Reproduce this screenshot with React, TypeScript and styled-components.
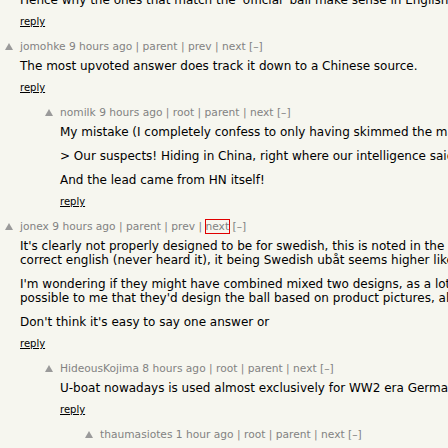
import React from 'react';
import styled, { createGlobalStyle } from 'styled-components';

const GlobalStyle = createGlobalStyle`
  html, body {
    margin: 0;
    padding: 0;
    background: #f6f6ef;
    overflow: hidden;
  }
  body {
    font-family: Verdana, "DejaVu Sans", Geneva, sans-serif;
    color: #000;
  }
`;

const Thread = styled.div`
  width: 515px;
  margin-top: -7px;
`;

const CommentRow = styled.div<{ $level: number }>`
  display: flex;
  align-items: flex-start;
  padding-left: ${(p) => p.$level * 40}px;
  margin-top: 12px;
  &:first-child {
    margin-top: 0;
  }
`;

const VoteCell = styled.div`
  width: 20px;
  flex-shrink: 0;
`;

const VoteArrow = styled.div`
  width: 0;
  height: 0;
  margin: 3px 0 0 5px;
  border-left: 4px solid transparent;
  border-right: 4px solid transparent;
  border-bottom: 7px solid #9a9a9a;
`;

const Content = styled.div`
  flex: 1;
  min-width: 0;
`;

const Head = styled.div`
  font-size: 8pt;
  line-height: 13px;
  color: #828282;
  white-space: nowrap;
`;

const HeadLink = styled.a<{ $focused?: boolean }>`
  color: #828282;
  text-decoration: none;
  outline: ${(p) => (p.$focused ? '1px solid #e00000' : 'none')};
`;

const Body = styled.div<{ $first?: boolean }>`
  font-size: 12px;
  line-height: 14px;
  margin-top: ${(p) => (p.$first ? 0 : 6)}px;
`;

const Para = styled.p`
  margin: 0;
  & + & {
    margin-top: 10px;
  }
`;

const Reply = styled.div`
  margin-top: 9px;
  font-size: 10px;
  line-height: 12px;
`;

const ReplyLink = styled.a`
  color: #000;
  text-decoration: underline;
`;

type CommentData = {
  level: number;
  user?: string;
  age?: string;
  links?: string[];
  focused?: string;
  paras: string[];
};

const comments: CommentData[] = [
  {
    level: 0,
    paras: ["Hence why the ones that match the 'official' ball make sense in English."],
  },
  {
    level: 0,
    user: 'jomohke',
    age: '9 hours ago',
    links: ['parent', 'prev', 'next'],
    paras: ['The most upvoted answer does track it down to a Chinese source.'],
  },
  {
    level: 1,
    user: 'nomilk',
    age: '9 hours ago',
    links: ['root', 'parent', 'next'],
    paras: [
      'My mistake (I completely confess to only having skimmed the matter).',
      '> Our suspects! Hiding in China, right where our intelligence said!',
      'And the lead came from HN itself!',
    ],
  },
  {
    level: 0,
    user: 'jonex',
    age: '9 hours ago',
    links: ['parent', 'prev', 'next'],
    focused: 'next',
    paras: [
      "It's clearly not properly designed to be for swedish, this is noted in the article correct english (never heard it), it being Swedish ubåt seems higher likely.",
      "I'm wondering if they might have combined mixed two designs, as a lot of it is possible to me that they'd design the ball based on product pictures, also.",
      "Don't think it's easy to say one answer or",
    ],
  },
  {
    level: 1,
    user: 'HideousKojima',
    age: '8 hours ago',
    links: ['root', 'parent', 'next'],
    paras: ['U-boat nowadays is used almost exclusively for WW2 era German.'],
  },
  {
    level: 2,
    user: 'thaumasiotes',
    age: '1 hour ago',
    links: ['root', 'parent', 'next'],
    paras: ['Only in English; in German it is still the normal word.'],
  },
];

function Comment({ c }: { c: CommentData }) {
  return (
    <CommentRow $level={c.level}>
      <VoteCell>{c.user && <VoteArrow />}</VoteCell>
      <Content>
        {c.user && (
          <Head>
            <HeadLink href="#">{c.user}</HeadLink> <HeadLink href="#">{c.age}</HeadLink>
            {c.links?.map((l) => (
              <React.Fragment key={l}>
                {' | '}
                <HeadLink href="#" $focused={c.focused === l}>
                  {l}
                </HeadLink>
              </React.Fragment>
            ))}{' '}
            <HeadLink href="#">[–]</HeadLink>
          </Head>
        )}
        <Body $first={!c.user}>
          {c.paras.map((p, i) => (
            <Para key={i}>{p}</Para>
          ))}
        </Body>
        <Reply>
          <ReplyLink href="#">reply</ReplyLink>
        </Reply>
      </Content>
    </CommentRow>
  );
}

export default function App() {
  return (
    <>
      <GlobalStyle />
      <Thread>
        {comments.map((c, i) => (
          <Comment key={i} c={c} />
        ))}
      </Thread>
    </>
  );
}
